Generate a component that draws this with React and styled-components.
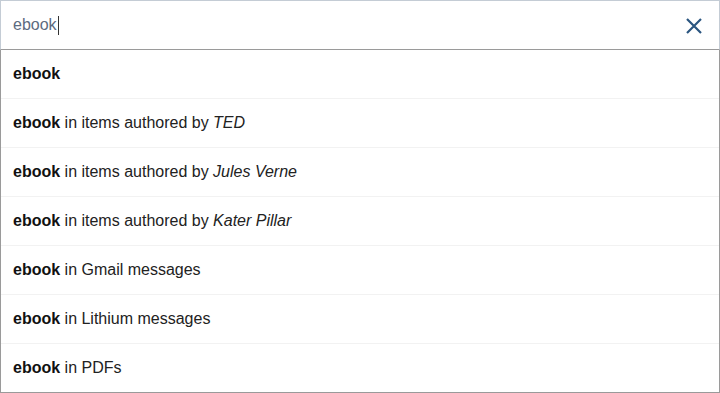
import React from "react";
import styled, { createGlobalStyle } from "styled-components";

const suggestions = [
  { rest: null },
  { rest: "in items authored by ", author: "TED" },
  { rest: "in items authored by ", author: "Jules Verne" },
  { rest: "in items authored by ", author: "Kater Pillar" },
  { rest: "in Gmail messages" },
  { rest: "in Lithium messages" },
  { rest: "in PDFs" },
];

export default function App() {
  const query = "ebook";
  return (
    <>
      <GlobalStyle />
      <Wrapper>
        <SearchBar>
          <QueryText>
            {query}
            <Caret />
          </QueryText>
          <ClearButton aria-label="Clear">
            <svg width="18" height="18" viewBox="0 0 18 18">
              <path
                d="M2 2 L16 16 M16 2 L2 16"
                stroke="#2b5680"
                strokeWidth="2.2"
                fill="none"
              />
            </svg>
          </ClearButton>
        </SearchBar>
        <List>
          {suggestions.map((s, i) => (
            <Row key={i} last={i === suggestions.length - 1}>
              <b>{query}</b>
              {s.rest && " " + s.rest}
              {s.author && <i>{s.author}</i>}
            </Row>
          ))}
        </List>
      </Wrapper>
    </>
  );
}

const GlobalStyle = createGlobalStyle`
  body {
    margin: 0;
    background: #fff;
    font-family: "Liberation Sans", Arial, sans-serif;
  }
`;

const Wrapper = styled.div`
  width: 720px;
  height: 393px;
  display: flex;
  flex-direction: column;
  box-sizing: border-box;
`;

const SearchBar = styled.div`
  height: 50px;
  flex-shrink: 0;
  box-sizing: border-box;
  display: flex;
  align-items: center;
  justify-content: space-between;
  padding: 0 16px 0 12px;
  border: 1px solid #c4ccd5;
  border-bottom: 1px solid #9a9a9a;
`;

const QueryText = styled.div`
  display: flex;
  align-items: center;
  font-size: 16px;
  color: #5d6b80;
`;

const Caret = styled.span`
  display: inline-block;
  width: 1px;
  height: 19px;
  background: #333;
  margin-left: 1px;
`;

const ClearButton = styled.div`
  width: 18px;
  height: 18px;
  display: flex;
  align-items: center;
  justify-content: center;
  margin-top: 2px;
`;

const List = styled.div`
  flex: 1;
  display: flex;
  flex-direction: column;
  border: 1px solid #9a9a9a;
  border-top: none;
  box-sizing: border-box;
`;

const Row = styled.div`
  height: 49px;
  flex: ${(p) => (p.last ? "1" : "0 0 49px")};
  box-sizing: border-box;
  display: flex;
  align-items: center;
  white-space: pre;
  padding: 0 12px;
  font-size: 16px;
  color: #222;
  border-bottom: ${(p) => (p.last ? "none" : "1px solid #f2f2f2")};
  b {
    font-weight: bold;
    color: #111;
  }
  i {
    font-style: italic;
  }
`;
